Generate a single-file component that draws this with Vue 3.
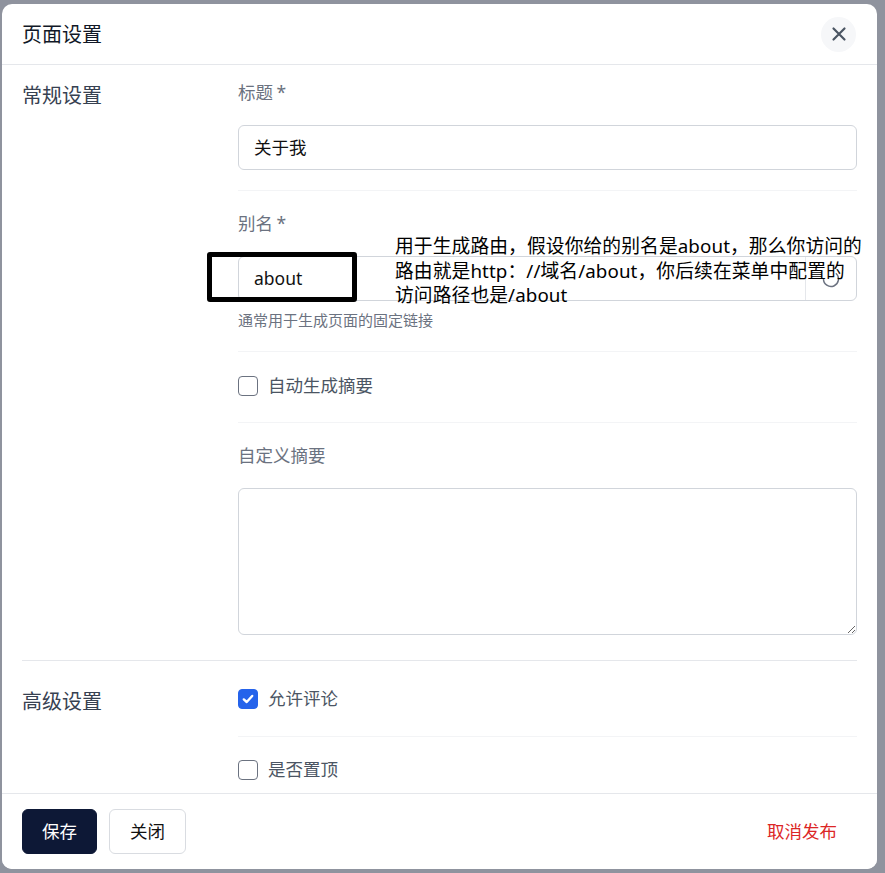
<script setup>
const noteLines = [
  '用于生成路由，假设你给的别名是about，那么你访问的',
  '路由就是http：//域名/about，你后续在菜单中配置的',
  '访问路径也是/about',
]
</script>

<template>
  <div class="page">
    <div class="modal">
      <header class="head">
        <h2 class="title">页面设置</h2>
        <button class="close" type="button" aria-label="关闭">
          <svg width="20" height="20" viewBox="0 0 20 20" fill="none" stroke="#4b5563" stroke-width="2.2" stroke-linecap="round">
            <path d="M4.5 4.5 15.5 15.5M15.5 4.5 4.5 15.5" />
          </svg>
        </button>
      </header>

      <div class="body">
        <section class="section">
          <div class="section-name">常规设置</div>
          <div class="fields">
            <div class="field">
              <div class="label">标题 *</div>
              <div class="input">关于我</div>
            </div>
            <div class="field">
              <div class="label">别名 *</div>
              <div class="input with-suffix">
                <span class="value">about</span>
                <span class="suffix">
                  <svg width="22" height="22" viewBox="0 0 22 22" fill="none" stroke="#6b7280" stroke-width="1.5" stroke-linecap="round">
                    <path d="M16.3 5.7A7.5 7.5 0 1 1 3.5 11" />
                  </svg>
                </span>
              </div>
              <div class="help">通常用于生成页面的固定链接</div>
            </div>
            <div class="field check-field">
              <div class="check"><span class="box"></span>自动生成摘要</div>
            </div>
            <div class="field area-field">
              <div class="label">自定义摘要</div>
              <textarea class="area"></textarea>
            </div>
          </div>
        </section>

        <section class="section second">
          <div class="section-name">高级设置</div>
          <div class="fields">
            <div class="field check-field">
              <div class="check">
                <span class="box on">
                  <svg width="14" height="14" viewBox="0 0 14 14" fill="none" stroke="#fff" stroke-width="2.4" stroke-linecap="round" stroke-linejoin="round">
                    <path d="M2.8 7.4 5.7 10 11.2 4" />
                  </svg>
                </span>
                允许评论
              </div>
            </div>
            <div class="field">
              <div class="check"><span class="box"></span>是否置顶</div>
            </div>
          </div>
        </section>
      </div>

      <footer class="foot">
        <button class="btn primary" type="button">保存</button>
        <button class="btn" type="button">关闭</button>
        <button class="btn danger" type="button">取消发布</button>
      </footer>

      <div class="mark"></div>
      <div class="note">
        <div v-for="line in noteLines" :key="line">{{ line }}</div>
      </div>
    </div>
  </div>
</template>

<style>
html, body { margin: 0; background: #8f939e; }
</style>

<style scoped>
* { box-sizing: border-box; }
.page {
  width: 885px;
  height: 873px;
  padding: 4px 8px 4px 2px;
  background: #8f939e;
  overflow: hidden;
  font-family: "Noto Sans", "Noto Sans CJK SC", sans-serif;
  font-size: 17.5px;
  line-height: 27px;
}
.modal {
  position: relative;
  height: 865px;
  display: flex;
  flex-direction: column;
  background: #fff;
  border-radius: 10px;
  overflow: hidden;
}
.head {
  flex: none;
  height: 61px;
  padding: 0 20px;
  display: flex;
  align-items: center;
  justify-content: space-between;
  border-bottom: 1px solid #e5e7eb;
}
.title { margin: 0; font-size: 20px; font-weight: 400; color: #111827; }
.close {
  width: 35px;
  height: 35px;
  margin-right: 1px;
  padding: 0;
  display: flex;
  align-items: center;
  justify-content: center;
  border: 0;
  border-radius: 50%;
  background: #f6f7f9;
}
.body { flex: 1; min-height: 0; overflow: hidden; padding: 0 20px; }
.section { display: grid; grid-template-columns: 216px 1fr; }
.second { border-top: 1px solid #e5e7eb; }
.section-name { padding-top: 16px; font-size: 20px; line-height: 30px; color: #374151; }
.second .section-name { padding-top: 26px; }
.field { padding: 19px 0 20px; border-bottom: 1px solid #f3f4f6; }
.field:last-child { border-bottom: 0; }
.fields > .field:first-child { padding-top: 14px; }
.check-field { padding-top: 20px; padding-bottom: 23px; }
.second .fields > .check-field:first-child { padding-top: 24px; padding-bottom: 24px; }
.area-field { padding-bottom: 25px; }
.label { color: #6b7280; margin-bottom: 19px; word-spacing: -1px; }
.input {
  height: 45px;
  padding: 0 15px;
  display: flex;
  align-items: center;
  border: 1px solid #d1d5db;
  border-radius: 6px;
  color: #111;
}
.with-suffix { padding-right: 0; justify-content: space-between; }
.suffix {
  width: 51px;
  height: 100%;
  display: flex;
  align-items: center;
  justify-content: center;
  border-left: 1px solid #e5e7eb;
}
.help { margin-top: 8px; font-size: 15px; line-height: 22px; color: #6b7280; }
.check { display: flex; align-items: center; gap: 10px; color: #4b5563; }
.box {
  flex: none;
  width: 20px;
  height: 20px;
  display: flex;
  align-items: center;
  justify-content: center;
  border: 1px solid #6b7280;
  border-radius: 4px;
  background: #fff;
}
.box.on { border-color: #2563eb; background: #2563eb; }
.area {
  display: block;
  width: 100%;
  height: 147px;
  border: 1px solid #d1d5db;
  border-radius: 6px;
  resize: vertical;
  background: #fff;
}
.foot {
  flex: none;
  height: 76px;
  padding: 0 20px;
  display: flex;
  align-items: center;
  gap: 12px;
  border-top: 1px solid #e5e7eb;
  background: #fff;
}
.btn {
  height: 45px;
  padding: 0 20px;
  border: 1px solid #d9dce1;
  border-radius: 6px;
  background: #fff;
  color: #111;
  font: inherit;
  white-space: nowrap;
}
.primary { width: 75px; padding: 0; border-color: #0d1836; background: #0d1836; color: #fff; }
.danger { margin-left: auto; border: 0; color: #dc2626; }
.mark {
  position: absolute;
  left: 205px;
  top: 248px;
  width: 150px;
  height: 50px;
  border: 5px solid #000;
  border-radius: 3px;
}
.note {
  position: absolute;
  left: 393px;
  top: 230px;
  color: #000;
  font-size: 18.75px;
  line-height: 24.5px;
  letter-spacing: 0.1px;
  white-space: nowrap;
}
</style>
